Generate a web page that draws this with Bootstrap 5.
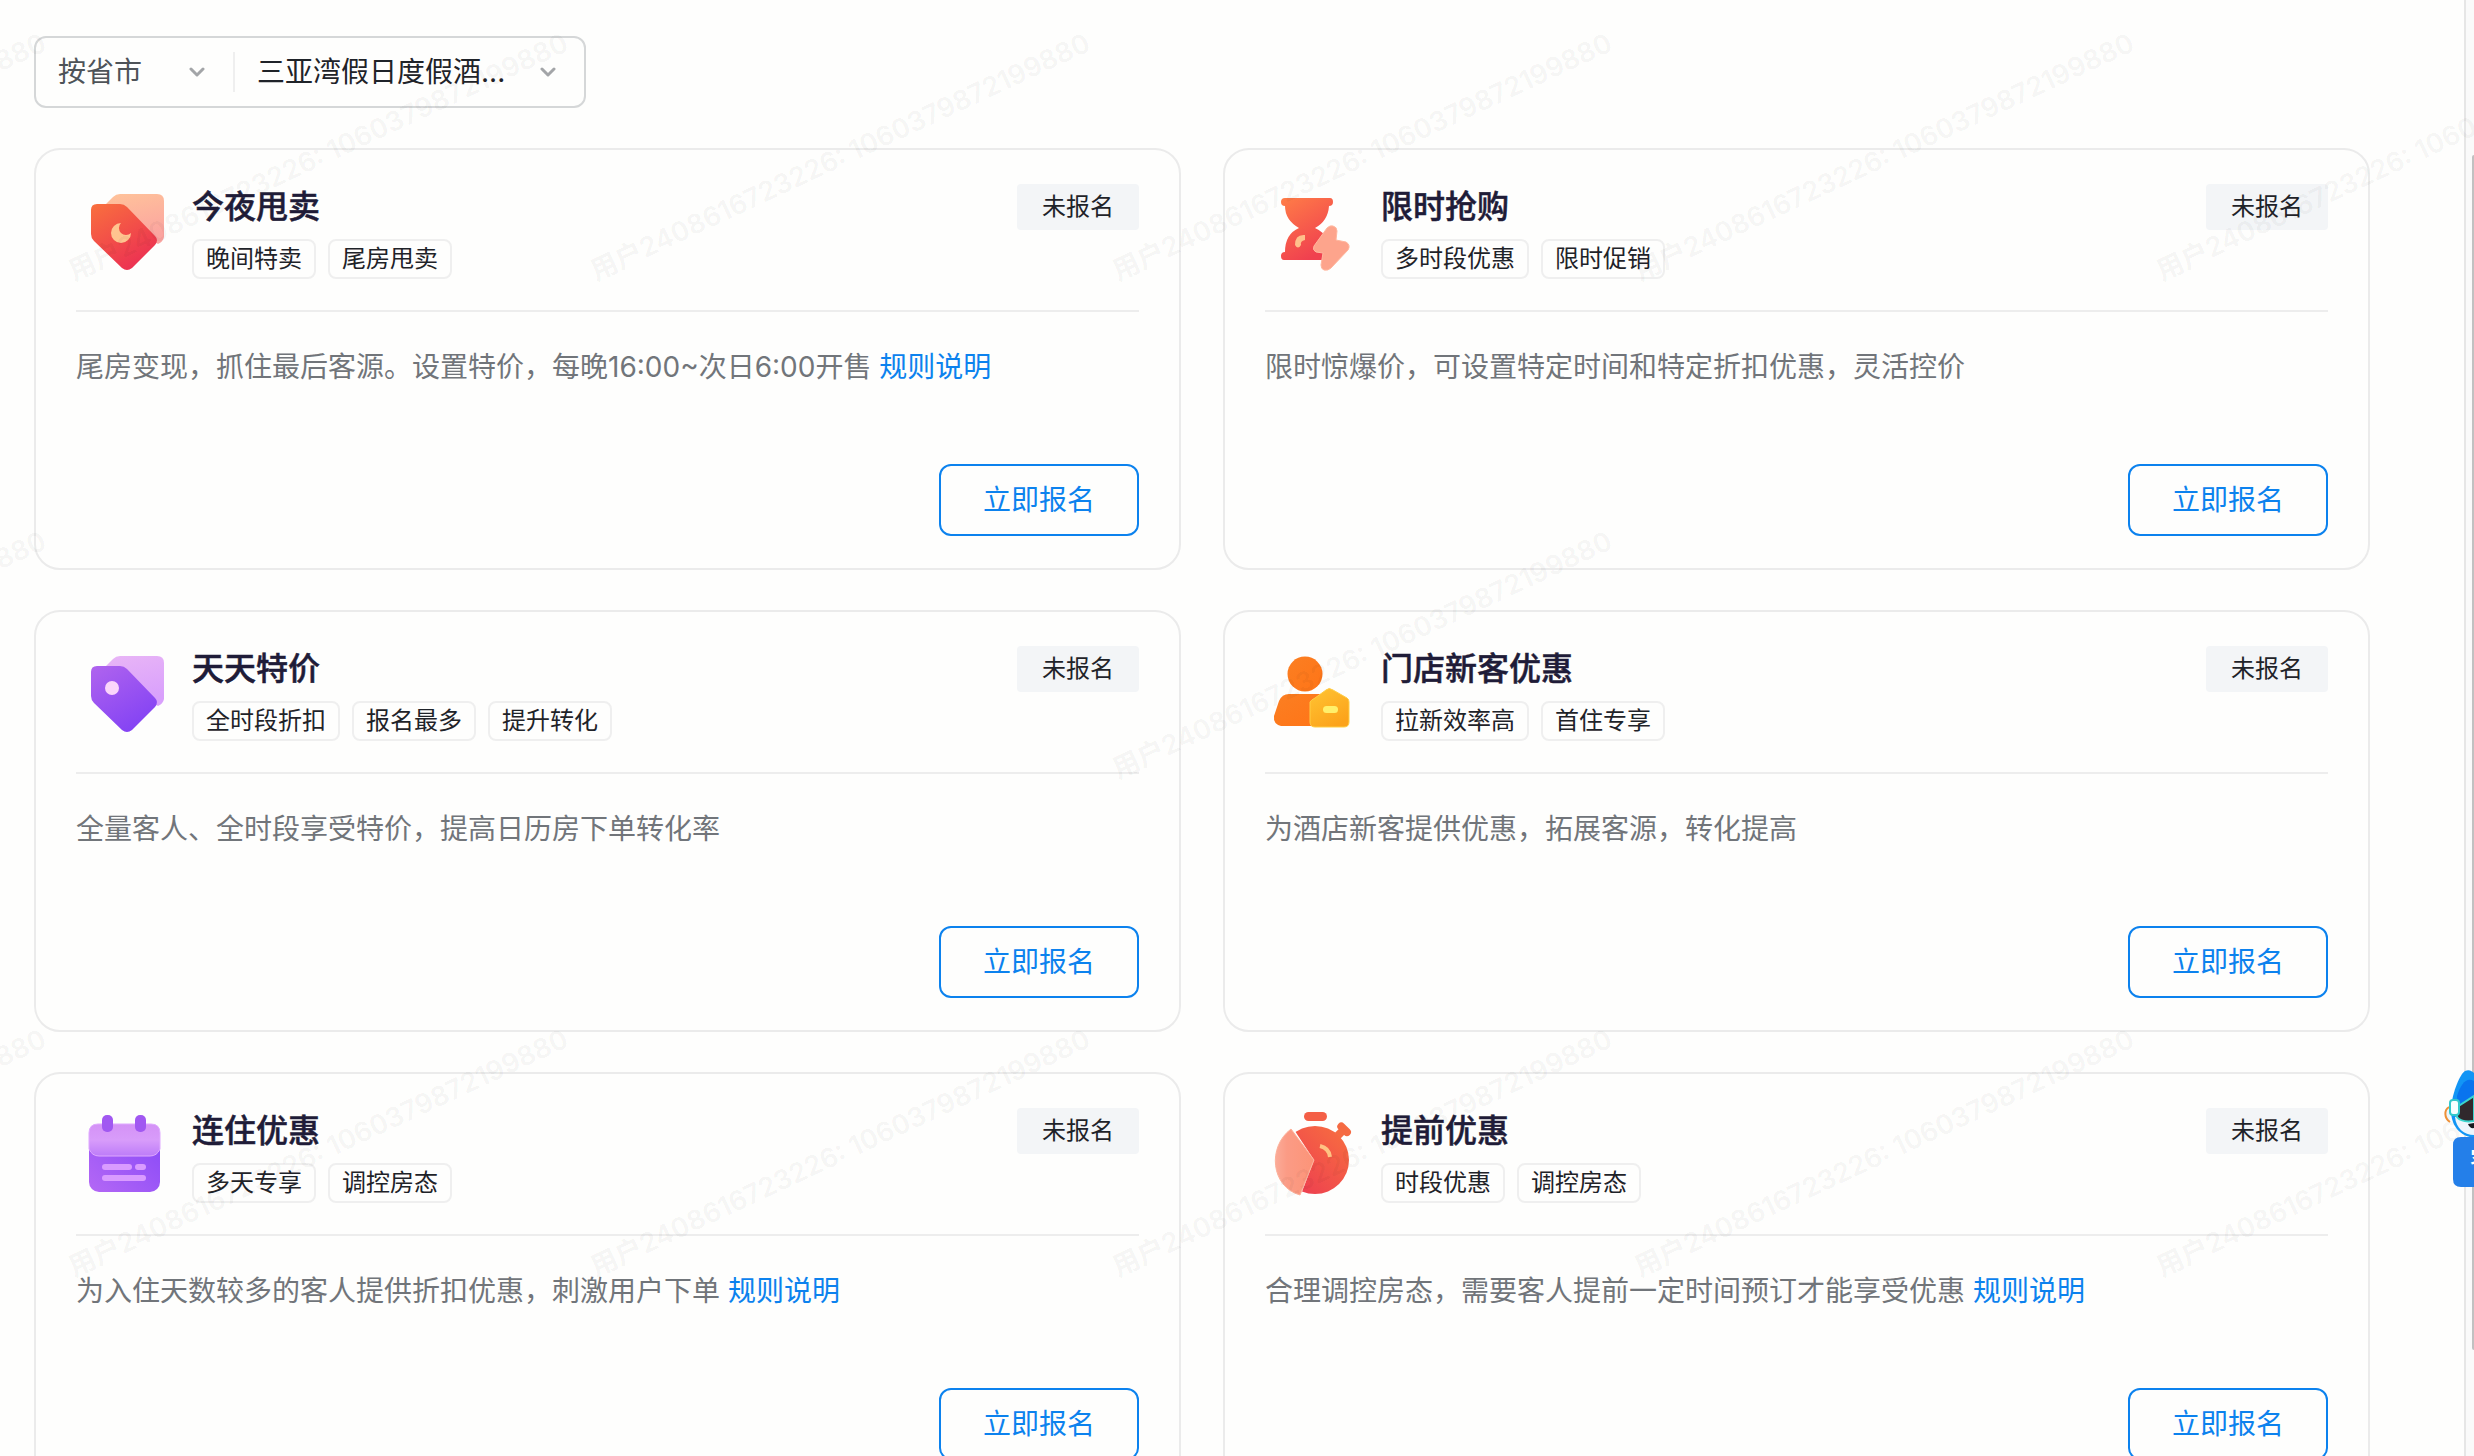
<!DOCTYPE html>
<html lang="zh-CN">
<head>
<meta charset="utf-8">
<meta name="viewport" content="width=device-width, initial-scale=1">
<title>促销活动</title>
<link href="https://cdn.jsdelivr.net/npm/bootstrap@5.3.0/dist/css/bootstrap.min.css" rel="stylesheet">
<style>
html{overflow:hidden}
body{font-family:Inter,"Noto Sans CJK SC",sans-serif;font-size:28px;line-height:40px;color:#1f2329;background:#fefefd;height:100vh;overflow:hidden;position:relative}
.page-main{border-right:2px solid #e6e6e6;padding:36px 94px 0 34px;overflow:hidden}
.scroll-rail{width:8px;background:#fafafa;padding:155px 0 106px 6px}
.scroll-thumb{background:#c1c1c1;border-radius:8px 0 0 8px}
.hotel-filter{border:2px solid #d5d7d8;border-radius:12px;height:72px;width:552px}
.hotel-filter label{position:relative}
.hotel-filter select{appearance:none;border:0;background:transparent;color:inherit;width:100%;height:40px;padding:0;outline:0}
.hotel-filter svg{position:absolute;top:14px;right:28px;pointer-events:none}
.by-area{width:197px;padding-left:22px;color:#4e5358}
.by-hotel{padding-left:22px;border-left:2px solid #efefef}
.promo-grid{margin-top:40px;grid-template-columns:repeat(2,minmax(0,1fr));gap:40px 42px}
.promo-card{border:2px solid #ebebeb;border-radius:26px;background:none;height:422px;padding:34px 40px 32px}
.promo-head{border-bottom:2px solid #ededed;height:128px}
.promo-icon{width:92px;height:92px;margin:2px 24px 0 0}
.promo-title{font-size:32px;line-height:46px;font-weight:500;color:#1f1c38;margin:0 0 9px;-webkit-text-stroke:.5px #1f1c38}
.promo-tags{gap:12px}
.promo-tag{font-size:24px;line-height:36px;border:2px solid #efefef;border-radius:8px;padding:0 12px;color:#1f2329}
.promo-state{font-size:24px;line-height:46px;background:#f3f5f7;border-radius:4px;padding:0 25px}
.promo-desc{margin:35px 0 0;color:#71757a}
.promo-desc a,.btn-join{color:#0c82ee}
.btn-join{--bs-btn-hover-color:#fff;--bs-btn-hover-bg:#0c82ee;border:2px solid #0c82ee;border-radius:12px;width:200px;height:72px;font-size:28px;line-height:40px}
.wm-layer{position:absolute;inset:0;width:100%;height:100%;pointer-events:none}
.helper{position:absolute;right:0;top:1064px;width:32px;height:124px;padding:0;border:0;background:none}
.helper svg{display:block}
.helper-label{position:absolute;left:28px;top:80px;font-size:24px;line-height:32px;color:#fff;font-weight:500;width:4px;overflow:hidden;white-space:nowrap}
</style>
<script src="https://cdn.jsdelivr.net/npm/bootstrap@5.3.0/dist/js/bootstrap.bundle.min.js"></script>
</head>
<body>
<svg width="0" height="0" class="position-absolute" aria-hidden="true">
<defs>
<linearGradient id="red" x1="0" y1="0" x2=".6" y2="1"><stop stop-color="#f9703e"/><stop offset="1" stop-color="#ec3152"/></linearGradient>
<linearGradient id="glass" x1="0" y1="0" x2=".3" y2="1"><stop stop-color="#ffc49a"/><stop offset="1" stop-color="#fba4a0"/></linearGradient>
<linearGradient id="sand" x1="0" y1="0" x2=".5" y2="1"><stop stop-color="#ff7d47"/><stop offset="1" stop-color="#f0404f"/></linearGradient>
<linearGradient id="violet" x1="0" y1="0" x2=".6" y2="1"><stop stop-color="#b064ee"/><stop offset="1" stop-color="#8443f4"/></linearGradient>
<linearGradient id="lilac" x1="0" y1="0" x2=".3" y2="1"><stop stop-color="#e9b6f6"/><stop offset="1" stop-color="#d9a0fc"/></linearGradient>
<linearGradient id="cal" x1="0" y1="1" x2="1" y2="0"><stop stop-color="#b468f5"/><stop offset="1" stop-color="#8647f8"/></linearGradient>
<linearGradient id="flap" x1="0" y1="0" x2="0" y2="1"><stop stop-color="#d492f6"/><stop offset=".5" stop-color="#d89cfa"/><stop offset="1" stop-color="#bd7cf8"/></linearGradient>
<linearGradient id="orange" x1="0" y1="0" x2="1" y2="1"><stop stop-color="#fb7f22"/><stop offset="1" stop-color="#ff7417"/></linearGradient>
<linearGradient id="gold" x1="0" y1="0" x2=".6" y2="1"><stop stop-color="#ffc533"/><stop offset="1" stop-color="#fca31b"/></linearGradient>
<linearGradient id="watch" x1="0" y1="1" x2="1" y2="0"><stop offset=".2" stop-color="#ee424f"/><stop offset="1" stop-color="#f8703f"/></linearGradient>
<linearGradient id="slice" x1="0" y1="0" x2="1" y2="0"><stop stop-color="#fbab98"/><stop offset=".3" stop-color="#fb9b85"/><stop offset="1" stop-color="#fc9478"/></linearGradient>
</defs>
</svg>
<div class="d-flex h-100">
<main class="page-main flex-grow-1">
<form class="hotel-filter d-flex align-items-center">
<label class="by-area"><select aria-label="筛选方式"><option>按省市</option></select><svg width="16" height="12" viewBox="0 0 16 12" fill="none" stroke="#a3a5a8" stroke-width="3" stroke-linecap="round" stroke-linejoin="round"><path d="M2 3l6 6 6-6"/></svg></label>
<label class="by-hotel flex-grow-1"><select aria-label="酒店"><option>三亚湾假日度假酒...</option></select><svg width="16" height="12" viewBox="0 0 16 12" fill="none" stroke="#a3a5a8" stroke-width="3" stroke-linecap="round" stroke-linejoin="round"><path d="M2 3l6 6 6-6"/></svg></label>
</form>
<div class="d-grid promo-grid" id="promos"></div>
</main>
<div class="scroll-rail d-flex"><div class="scroll-thumb flex-grow-1"></div></div>
</div>
<svg class="wm-layer" id="wm" aria-hidden="true"></svg>
<button class="helper" type="button" aria-label="客服">
<svg width="32" height="124" viewBox="0 0 32 124">
<path d="M7 43C2 46 2 54 8 58" fill="#e9f5fb" stroke="#ee9138" stroke-width="2"/>
<path d="M9 43C11 27 18 10 23 7C27 5 30 7 32 9V74C18 72 8 62 9 43Z" fill="#1295f5"/>
<path d="M15 32C19 20 24 13 32 17V38L16 45Z" fill="#0974ee"/>
<path d="M13 53C14 64 22 71 32 71V48Z" fill="#edf5fc"/>
<path d="M15 43L32 32V57C25 58 18 57 15 53Z" fill="#30282c" stroke="#3bd5ce" stroke-width="2"/>
<rect x="8" y="36" width="9" height="15" rx="3" fill="#f5ffff" stroke="#32c9cb" stroke-width="2"/>
<path d="M26 60q2 5 6 4v-5z" fill="#16191e"/>
<path d="M32 73V123H19q-8 0-8-8V81q0-8 8-8Z" fill="#247fe9"/>
</svg><span class="helper-label">客服</span>
</button>
<script>
const icons={
night:'<path d="M28 36L39 25Q42 22 46 22H83Q90 22 90 29V65Q89 70 84 72Z" fill="url(#glass)"/><path d="M17 38Q17 32 23 32H46Q50 32 53 35L81 64Q85 68 81 73L58 96Q53 100 48 96L20 69Q17 66 17 62Z" fill="url(#red)"/><path d="M47 51A10 10 0 1 0 57 61A7 7 0 1 1 47 51Z" fill="#ffc48f"/>',
sand:'<path d="M22 26H67Q70 26 70 30T66 34Q65 49 52 56Q61 60 65 68V88H21Q18 88 18 84T22 80Q22 62 36 56Q22 48 22 34Q18 34 18 30T22 26Z" fill="url(#sand)"/><path d="M42 63Q32 62 32 73Q35 78 38 73Q37 69 42 68Z" fill="#ffc08b"/><path d="M64 56Q67 53 70 54Q74 55 74 59L73 68L83 70Q88 73 85 78L68 96Q65 99 61 98Q58 97 58 93L60 81L53 80Q49 78 51 74Z" fill="#fda48c" stroke="#ffb79e" stroke-width="1"/>',
tag:'<path d="M28 36L39 25Q42 22 46 22H83Q90 22 90 29V65Q89 70 84 72Z" fill="url(#lilac)"/><path d="M17 38Q17 32 23 32H46Q50 32 53 35L81 64Q85 68 81 73L58 96Q53 100 48 96L20 69Q17 66 17 62Z" fill="url(#violet)"/><circle cx="38" cy="54" r="7" fill="#fbd5fb"/>',
user:'<circle cx="42" cy="40" r="17.500" fill="url(#orange)"/><path d="M26 60H60V92H18Q10 90 11 82L16 67Q19 60 26 60Z" fill="url(#orange)"/><path d="M52 64L63 56Q66 53 70 56L84 64Q86 65 86 68V88Q86 93 81 93H52Q47 93 47 88V68Q48 66 52 64Z" fill="url(#gold)" stroke="#ffcd45" stroke-width="1"/><rect x="60" y="72" width="15" height="7" rx="3.500" fill="#fff06b"/>',
cal:'<g transform="translate(0 -3)"><rect x="15" y="33" width="71" height="66" rx="10" fill="url(#cal)"/><path d="M15 56V40Q15 31 24 31H77Q86 31 86 40V56Q83 63 76 63H25Q18 63 15 56Z" fill="url(#flap)" stroke="#dfa9ff" stroke-width="1"/><rect x="28" y="22" width="11" height="17" rx="5" fill="#a158f1"/><rect x="61" y="22" width="11" height="17" rx="5" fill="#a158f1"/><g fill="#d99bff"><rect x="28" y="71" width="30" height="6" rx="3"/><rect x="61" y="71" width="11" height="6" rx="3"/><rect x="28" y="82" width="44" height="6" rx="3"/></g></g>',
watch:'<g transform="translate(1 -3)"><rect x="40" y="19" width="23" height="9" rx="4.500" fill="#f45f46"/><g transform="rotate(45 78 37)"><rect x="71" y="31" width="16" height="8" rx="4" fill="#f56a42"/><rect x="75" y="36" width="8" height="8" fill="#f56a42"/></g><circle cx="51" cy="67" r="34" fill="url(#watch)"/><path d="M27 32L50 67L36 104C-2 94-2 50 27 32Z" fill="#fefefd"/><path d="M27 36L50 67L36 102C7 94 3 54 27 36Z" fill="url(#slice)" stroke="#fdb19a" stroke-width="1"/><path d="M56 53Q65 55 66 64" fill="none" stroke="#ffc383" stroke-width="4"/></g>'};
const promos=[
['night','今夜甩卖',['晚间特卖','尾房甩卖'],'尾房变现，抓住最后客源。设置特价，每晚16:00~次日6:00开售',1],
['sand','限时抢购',['多时段优惠','限时促销'],'限时惊爆价，可设置特定时间和特定折扣优惠，灵活控价',0],
['tag','天天特价',['全时段折扣','报名最多','提升转化'],'全量客人、全时段享受特价，提高日历房下单转化率',0],
['user','门店新客优惠',['拉新效率高','首住专享'],'为酒店新客提供优惠，拓展客源，转化提高',0],
['cal','连住优惠',['多天专享','调控房态'],'为入住天数较多的客人提供折扣优惠，刺激用户下单',1],
['watch','提前优惠',['时段优惠','调控房态'],'合理调控房态，需要客人提前一定时间预订才能享受优惠',1]];
document.getElementById('promos').innerHTML=promos.map(([ic,t,tags,d,l])=>`<article class="card promo-card"><header class="promo-head d-flex align-items-start"><svg class="promo-icon flex-shrink-0" viewBox="2 14 92 92" aria-hidden="true">${icons[ic]}</svg><div class="flex-grow-1"><h2 class="promo-title">${t}</h2><div class="d-flex promo-tags">${tags.map(x=>`<span class="promo-tag">${x}</span>`).join('')}</div></div><span class="promo-state">未报名</span></header><p class="promo-desc">${d}${l?' <a href="#" class="text-decoration-none">规则说明</a>':''}</p><button type="button" class="btn btn-join mt-auto ms-auto">立即报名</button></article>`).join('');
// [column, row] cells of the watermark lattice
const cells=[[-1,0],[0,0],[1,0],[2,0],[3,0],[4,0],[-1,1],[2,1],[-1,2],[0,2],[1,2],[2,2],[3,2],[4,2]];
document.getElementById('wm').innerHTML=`<g font-size="27" font-weight="600" fill="#000" fill-opacity=".05">${cells.map(([c,r])=>`<text transform="translate(${74+c*522} ${281+r*498}) rotate(-25)">用户2408616723226: 1060379872199880</text>`).join('')}</g>`;
</script>
</body>
</html>
